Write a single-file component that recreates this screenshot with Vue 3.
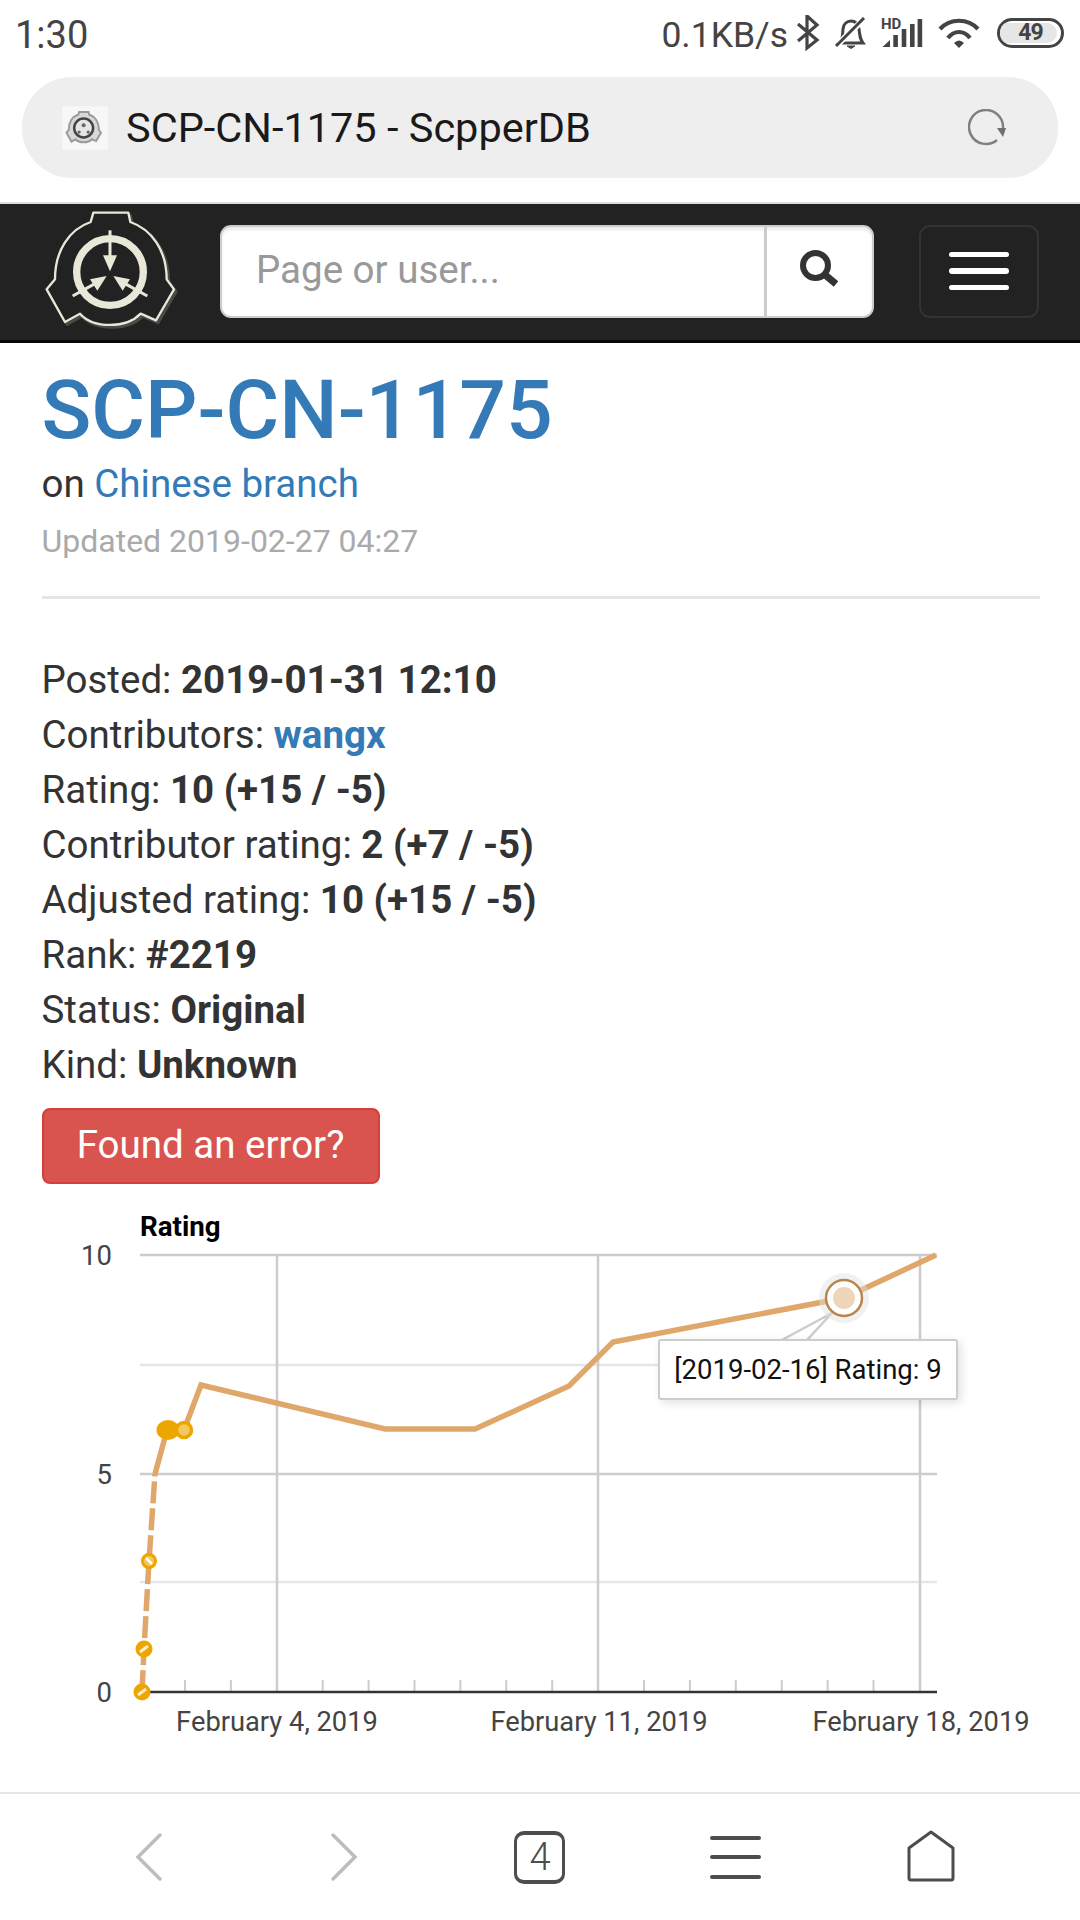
<script setup>
const rows = [
  ['Posted: ', '2019-01-31 12:10', false],
  ['Contributors: ', 'wangx', true],
  ['Rating: ', '10 (+15 / -5)', false],
  ['Contributor rating: ', '2 (+7 / -5)', false],
  ['Adjusted rating: ', '10 (+15 / -5)', false],
  ['Rank: ', '#2219', false],
  ['Status: ', 'Original', false],
  ['Kind: ', 'Unknown', false],
]
const hGrid = [
  { y: 1255, c: '#cccccc' },
  { y: 1365, c: '#e6e6e6' },
  { y: 1474, c: '#cccccc' },
  { y: 1582, c: '#e6e6e6' },
]
const majors = [277, 598, 920]
const minors = []
for (let i = 0; i < 16; i++) {
  const x = 185 + i * 45.9
  if (![2, 9].includes(i) && x < 915) minors.push(x)
}
const yLabels = [
  { t: '10', y: 1265 },
  { t: '5', y: 1484 },
  { t: '0', y: 1702 },
]
const xLabels = [
  { t: 'February 4, 2019', x: 277 },
  { t: 'February 11, 2019', x: 599 },
  { t: 'February 18, 2019', x: 921 },
]
const solid = '155,1474 167,1430 184,1430 201,1385 385,1429 475,1429 569,1386 613,1342 844,1298 936,1255'
const dashed = '142,1692 144,1649 149,1561 155,1474'
const logoPath = 'M190 62 L295 62 L301 90 C365 112 410 175 410 262 L432 292 L378 385 L332 365 C290 410 190 410 150 365 L105 390 L50 292 L75 262 C75 175 118 112 182 90 Z'
</script>

<template>
  <div class="page">
    <div class="status">
      <span class="time">1:30</span>
      <div class="status-right">
        <span class="speed">0.1KB/s</span>
        <svg class="ic-bt" viewBox="0 0 24 36"><path d="M2 9 L21 25 L11 33 L11 1 L21 10 L2 26" fill="none" stroke="#444" stroke-width="3.2"/></svg>
        <svg class="ic-bell" viewBox="0 0 32 32">
          <path d="M4 26 L28 26 C25 22 25 20 24 12 C23 7 20 4 16 4 C12 4 8.5 7 8 12 C7.5 20 7 23 4 26 Z" fill="none" stroke="#444" stroke-width="3"/>
          <path d="M12 29 H20 L16 31.5 Z" fill="#444" stroke="#444"/>
          <path d="M3 27 L28 3" stroke="#fff" stroke-width="6"/>
          <path d="M1 29 L29 1" stroke="#444" stroke-width="3"/>
        </svg>
        <svg class="ic-sig" viewBox="0 0 42 32">
          <text x="0" y="12" class="hd">HD</text>
          <path d="M1.5 30 L9 23 V30 Z" fill="#444"/>
          <rect x="12.3" y="18" width="4.6" height="12" fill="#444"/>
          <rect x="20.7" y="12" width="4.6" height="18" fill="#444"/>
          <rect x="29" y="7" width="4.6" height="23" fill="#444"/>
          <rect x="36.6" y="2" width="4.6" height="28" fill="#444"/>
        </svg>
        <svg class="ic-wifi" viewBox="0 0 42 32">
          <path d="M2 12 C12 1 30 1 40 12" fill="none" stroke="#444" stroke-width="4.2"/>
          <path d="M10 21 C16 13 26 13 32 21" fill="none" stroke="#444" stroke-width="4.2"/>
          <path d="M16 26 Q21 21 26 26 L21 31 Z" fill="#444"/>
        </svg>
        <div class="battery">
          <span class="batt-fill"></span>
          <span class="batt-num">49</span>
        </div>
      </div>
    </div>

    <div class="addr">
      <svg class="favicon" viewBox="0 0 510 480">
        <rect width="510" height="480" fill="#f7f7f7"/>
        <path :d="logoPath" fill="#d8d8d8" stroke="#9a9a9a" stroke-width="22"/>
        <circle cx="240" cy="240" r="105" fill="#e6e6e6" stroke="#444" stroke-width="28"/>
        <circle cx="240" cy="210" r="22" fill="#666"/>
        <circle cx="190" cy="285" r="18" fill="#666"/>
        <circle cx="290" cy="285" r="18" fill="#666"/>
      </svg>
      <span class="addr-title">SCP-CN-1175 - ScpperDB</span>
      <svg class="reload" viewBox="0 0 38 38">
        <path d="M29 31 A17 17 0 1 1 35 19" fill="none" stroke="#808080" stroke-width="2.5"/>
        <path d="M29 19 H38 L35 28 Z" fill="#707070"/>
      </svg>
    </div>

    <nav class="nav">
      <svg class="logo" viewBox="0 0 510 480">
        <path :d="logoPath" transform="translate(6,7)" fill="none" stroke="#4a4a46" stroke-width="9" stroke-linejoin="round"/>
        <path :d="logoPath" fill="#222" stroke="#e9e7d8" stroke-width="7" stroke-linejoin="round"/>
        <circle cx="240" cy="240" r="100" fill="none" stroke="#e9e7d8" stroke-width="22"/>
        <path d="M240 115 V195" stroke="#e9e7d8" stroke-width="9"/>
        <path d="M219 190 H261 L240 238 Z" fill="#e9e7d8"/>
        <path d="M128 312 L195 275" stroke="#e9e7d8" stroke-width="9"/>
        <path d="M180 262 L230 252 L202 296 Z" fill="#e9e7d8"/>
        <path d="M352 312 L285 275" stroke="#e9e7d8" stroke-width="9"/>
        <path d="M300 262 L250 252 L278 296 Z" fill="#e9e7d8"/>
      </svg>
      <div class="search">
        <span class="placeholder">Page or user...</span>
        <span class="search-btn">
          <svg class="ic-search" viewBox="0 0 40 40">
            <circle cx="16.5" cy="16.5" r="12.5" fill="none" stroke="#333" stroke-width="6"/>
            <path d="M25 25 L37 35" stroke="#333" stroke-width="7"/>
          </svg>
        </span>
      </div>
      <div class="menu-btn">
        <span class="bar"></span><span class="bar"></span><span class="bar"></span>
      </div>
    </nav>

    <main class="content">
      <h1 class="title">SCP-CN-1175</h1>
      <div class="branch">on <a class="link">Chinese branch</a></div>
      <div class="updated">Updated 2019-02-27 04:27</div>
      <div class="rule"></div>
      <div class="facts">
        <div v-for="r in rows" :key="r[0]" class="fact">{{ r[0] }}<b :class="{ link: r[2] }">{{ r[1] }}</b></div>
      </div>
      <button class="err">Found an error?</button>

      <div class="chart">
        <svg class="chart-svg" viewBox="0 1206 1080 554">
          <text x="140" y="1236" class="c-title">Rating</text>
          <line v-for="g in hGrid" :key="g.y" x1="140" x2="937" :y1="g.y" :y2="g.y" :stroke="g.c" stroke-width="2.5"/>
          <line v-for="x in majors" :key="x" :x1="x" :x2="x" y1="1255" y2="1692" stroke="#cccccc" stroke-width="2.5"/>
          <line v-for="x in minors" :key="x" :x1="x" :x2="x" y1="1680" y2="1692" stroke="#cccccc" stroke-width="2"/>
          <line x1="140" x2="937" y1="1692" y2="1692" stroke="#333" stroke-width="2.5"/>
          <text v-for="l in yLabels" :key="l.t" x="112" :y="l.y" class="c-y">{{ l.t }}</text>
          <text v-for="l in xLabels" :key="l.t" :x="l.x" y="1731" class="c-x">{{ l.t }}</text>
          <polyline :points="solid" fill="none" stroke="#dfa86a" stroke-width="5.5"/>
          <polyline :points="dashed" fill="none" stroke="#dfa86a" stroke-width="5.5" stroke-dasharray="22 5"/>

          <circle cx="142" cy="1692" r="8.5" fill="#eda500"/>
          <path d="M138 1695 L146 1689" stroke="#fbeecb" stroke-width="3"/>
          <circle cx="144" cy="1649" r="8.5" fill="#eda500"/>
          <path d="M140 1652 L148 1646" stroke="#fbeecb" stroke-width="3"/>
          <circle cx="149" cy="1561" r="6.5" fill="#f3c860" stroke="#eda500" stroke-width="3"/>
          <path d="M146 1558 L152 1564" stroke="#fff" stroke-width="2.5"/>
          <ellipse cx="168" cy="1430" rx="11.5" ry="10" fill="#eda500"/>
          <circle cx="184" cy="1430" r="7.5" fill="#f3c860" stroke="#eda500" stroke-width="3.5"/>

          <path d="M832 1313 L780 1341 H806 Z" fill="#fff" stroke="#cccccc" stroke-width="2.5"/>
          <circle cx="844" cy="1298" r="25" fill="#e0e0e0" fill-opacity=".45"/>
          <circle cx="844" cy="1298" r="18" fill="#fff" stroke="#b8864e" stroke-width="2.5"/>
          <circle cx="844" cy="1298" r="11" fill="#f0d6b9"/>
        </svg>
        <div class="tip">[2019-02-16] Rating: 9</div>
      </div>
    </main>

    <footer class="bottom">
      <div class="cell">
        <svg class="arrow" viewBox="0 0 28 50"><path d="M25 3 L3 25 L25 47" fill="none" stroke="#bdbdbd" stroke-width="3.5" stroke-linecap="round"/></svg>
      </div>
      <div class="cell">
        <svg class="arrow" viewBox="0 0 28 50"><path d="M3 3 L25 25 L3 47" fill="none" stroke="#bdbdbd" stroke-width="3.5" stroke-linecap="round"/></svg>
      </div>
      <div class="cell"><div class="tab"><span>4</span></div></div>
      <div class="cell"><div class="ham"><span></span><span></span><span></span></div></div>
      <div class="cell">
        <svg class="home" viewBox="0 0 48 52">
          <path d="M24 2 L2 18 V48 Q2 50 4 50 H44 Q46 50 46 48 V18 Z" fill="none" stroke="#4d4d4d" stroke-width="3" stroke-linejoin="round"/>
        </svg>
      </div>
    </footer>
  </div>
</template>

<style>
html, body { margin: 0; background: #fff; }
</style>

<style scoped>
.page {
  width: 1080px;
  height: 1920px;
  overflow: hidden;
  background: #fff;
  display: flex;
  flex-direction: column;
  font-family: Roboto, "Liberation Sans", sans-serif;
  color: #333;
}
.status {
  height: 77px;
  flex: none;
  display: flex;
  justify-content: space-between;
  padding: 8px 16px 0 15px;
  box-sizing: border-box;
  color: #444;
  font-size: 38px;
}
.time { line-height: 54px; }
.status-right { display: flex; align-items: flex-start; height: 52px; }
.speed { line-height: 54px; font-size: 35.5px; }
.ic-bt { width: 24px; height: 36px; margin: 7px 0 0 8px; }
.ic-bell { width: 32px; height: 32px; margin: 9px 0 0 15px; }
.ic-sig { width: 42px; height: 32px; margin: 9px 0 0 14px; overflow: visible; }
.ic-wifi { width: 42px; height: 32px; margin: 9px 0 0 15px; }
.hd { font: 700 15px Roboto, sans-serif; fill: #444; }
.battery {
  position: relative;
  width: 67px;
  height: 30px;
  margin: 10px 0 0 17px;
  border: 3px solid #444;
  border-radius: 16px;
  box-sizing: border-box;
  overflow: hidden;
}
.batt-fill { position: absolute; left: 0; top: 2px; bottom: 2px; width: 57px; background: #e6e6e6; border-radius: 0 10px 10px 0; }
.batt-num { position: absolute; left: 0; right: 0; top: 0; text-align: center; font: 700 23px/24px Roboto, sans-serif; letter-spacing: -1px; color: #444; }
.addr {
  flex: none;
  height: 101px;
  margin: 0 22px;
  background: #eeeeee;
  border-radius: 50px;
  display: flex;
  align-items: center;
  padding: 0 52px 0 40px;
}
.favicon { width: 46px; height: 46px; flex: none; }
.addr-title { margin-left: 18px; flex: 1; font-size: 41.5px; color: #1a1a1a; font-weight: 400; }
.reload { width: 38px; height: 38px; flex: none; }
.nav {
  flex: none;
  height: 141px;
  margin-top: 24px;
  box-sizing: border-box;
  background: #222;
  border-top: 2px solid #ddd;
  border-bottom: 3px solid #080808;
  display: flex;
  align-items: center;
  padding: 0 41px 0 30px;
}
.logo { width: 170px; height: 160px; flex: none; }
.search {
  margin: -2px 0 0 20px;
  width: 654px;
  height: 93px;
  box-sizing: border-box;
  background: #fff;
  border: 2px solid #ccc;
  border-radius: 11px;
  display: flex;
  align-items: center;
  box-shadow: inset 0 3px 3px rgba(0,0,0,.08);
}
.placeholder { flex: 1; padding: 0 0 4px 34px; font-size: 38.5px; color: #999; }
.search-btn {
  width: 108px;
  height: 100%;
  border-left: 3px solid #ccc;
  box-sizing: border-box;
  display: flex;
  align-items: center;
  justify-content: center;
}
.ic-search { width: 40px; height: 40px; margin: 0 2px 4px 0; }
.menu-btn {
  margin: -2px 0 0 auto;
  width: 120px;
  height: 93px;
  box-sizing: border-box;
  border: 2px solid #333;
  border-radius: 11px;
  display: flex;
  flex-direction: column;
  align-items: center;
  justify-content: center;
  gap: 11px;
}
.bar { width: 60px; height: 5.5px; background: #fff; border-radius: 3px; }
.content {
  flex: 1;
  padding: 0 40px 0 41.5px;
  min-height: 0;
}
.title {
  margin: 18px 0 0;
  font-size: 82.3px;
  line-height: 99px;
  font-weight: 500;
  color: #337ab7;
}
.branch { font-size: 38.5px; line-height: 55px; margin-top: -4px; }
.link { color: #337ab7; }
.updated { font-size: 32px; line-height: 44px; color: #aaa; margin-top: 8px; }
.rule { height: 3px; background: #e5e5e5; margin-top: 33px; }
.facts { margin-top: 53px; }
.fact { font-size: 38.5px; line-height: 55px; }
.fact b { font-weight: 700; }
.err {
  display: block;
  margin-top: 16px;
  width: 338px;
  height: 76px;
  box-sizing: border-box;
  padding: 0 0 3px;
  background: #d9534f;
  border: 2px solid #d43f3a;
  border-radius: 8px;
  color: #fff;
  font: 400 38.5px Roboto, sans-serif;
}
.chart { position: relative; margin: 22px 0 0 -41.5px; width: 1080px; height: 554px; }
.chart-svg { display: block; width: 1080px; height: 554px; }
.c-title { font: 700 27.7px Roboto, sans-serif; fill: #000; }
.c-y { font: 400 27.5px Roboto, sans-serif; fill: #444; text-anchor: end; }
.c-x { font: 400 27.3px Roboto, sans-serif; fill: #444; text-anchor: middle; }
.tip {
  position: absolute;
  left: 658px;
  top: 133px;
  width: 300px;
  height: 61px;
  box-sizing: border-box;
  background: #fff;
  border: 2px solid #ccc;
  border-radius: 3px;
  box-shadow: 3px 3px 10px rgba(0,0,0,.12);
  font-size: 27.5px;
  line-height: 57px;
  text-align: center;
  color: #111;
}
.bottom {
  flex: none;
  height: 128px;
  box-sizing: border-box;
  border-top: 2px solid #e5e5e5;
  padding: 0 51px;
  display: grid;
  grid-template-columns: repeat(5, 1fr);
  align-items: center;
}
.cell { display: flex; justify-content: center; align-items: center; }
.arrow { width: 28px; height: 50px; display: block; }
.tab {
  width: 51px;
  height: 53px;
  box-sizing: border-box;
  border: 3px solid #4d4d4d;
  border-top-width: 4px;
  border-bottom-width: 4px;
  border-radius: 10px;
  display: flex;
  align-items: center;
  justify-content: center;
  font-size: 38px;
  font-weight: 300;
  color: #4d4d4d;
}
.ham { width: 51px; display: flex; flex-direction: column; gap: 15.5px; }
.ham span { height: 4px; background: #4d4d4d; border-radius: 2px; }
.home { width: 48px; height: 52px; display: block; margin-top: -2px; }
</style>
